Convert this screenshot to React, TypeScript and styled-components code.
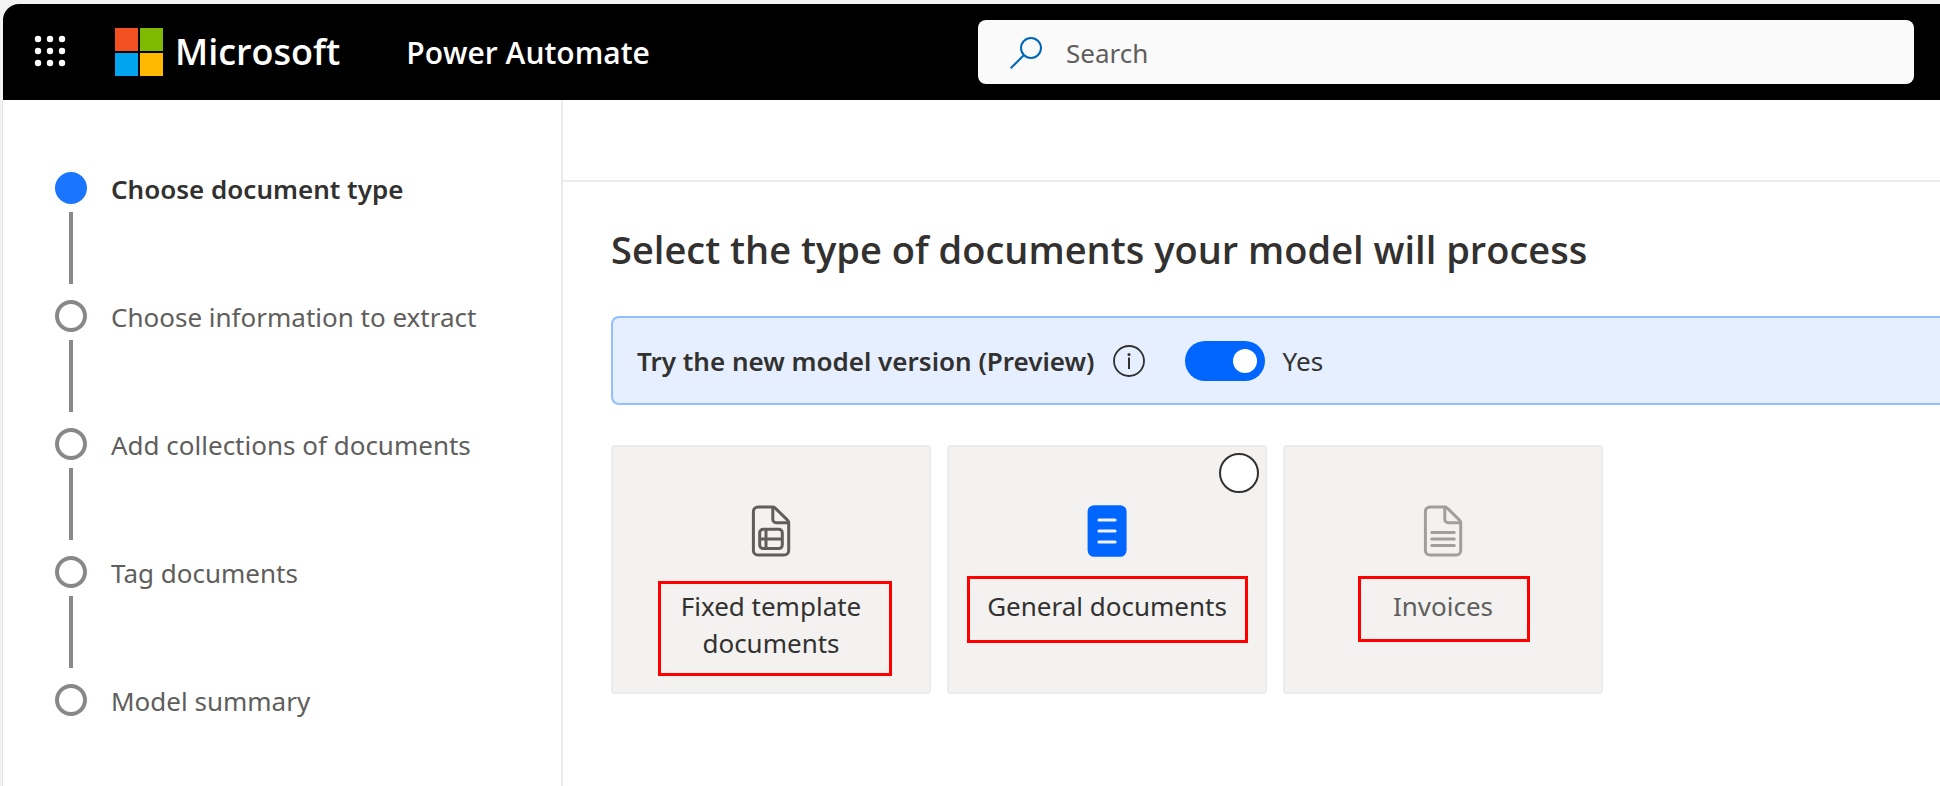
import React, { useState } from "react";
import styled, { createGlobalStyle } from "styled-components";

const GlobalStyle = createGlobalStyle`
  *, *::before, *::after { box-sizing: border-box; }
  body {
    margin: 0;
    background: #f3f3f3;
    color: #323130;
    font-family: "Noto Sans", "Open Sans", sans-serif;
    font-size: 26px;
  }
`;

const Shell = styled.div`
  display: flex;
  flex-direction: column;
  min-height: 100vh;
  padding: 4px 0 0 2px;
`;

const Header = styled.header`
  display: grid;
  grid-template-columns: minmax(660px, 975px) minmax(200px, 1fr);
  align-items: center;
  height: 96px;
  margin-left: 1px;
  padding-right: 26px;
  background: #000;
  border-top-left-radius: 16px;
`;

const Brand = styled.div`
  display: flex;
  align-items: center;
  padding-left: 30px;
`;

const LauncherButton = styled.button`
  display: flex;
  margin: 0 48px 0 0;
  padding: 0;
  border: 0;
  background: none;
  color: #fff;
`;

const MicrosoftLink = styled.a`
  display: flex;
  align-items: center;
  gap: 12px;
  color: #fff;
  font-family: "Open Sans", "Noto Sans", sans-serif;
  font-size: 36px;
  font-weight: 600;
  line-height: 48px;
  text-decoration: none;
`;

const ProductLink = styled.a`
  margin-left: 66px;
  padding-top: 2px;
  color: #fff;
  font-family: "Open Sans", "Noto Sans", sans-serif;
  font-size: 30px;
  font-weight: 600;
  line-height: 40px;
  text-decoration: none;
  white-space: nowrap;
`;

const SearchBox = styled.label`
  display: flex;
  align-items: center;
  gap: 24px;
  height: 64px;
  padding: 0 32px;
  border-radius: 8px;
  background: #fafafa;
`;

const SearchInput = styled.input`
  flex: 1;
  min-width: 0;
  padding: 2px 0 0;
  border: 0;
  outline: 0;
  background: none;
  color: #323130;
  font: inherit;
  &::placeholder {
    color: #605e5c;
    opacity: 1;
  }
`;

const Body = styled.div`
  display: flex;
  flex: 1;
  border-left: 1px solid #e5e5e5;
  background: #fff;
`;

const Sidebar = styled.nav`
  flex: 0 0 560px;
  padding: 72px 24px 0 52px;
  border-right: 2px solid #ebebeb;
`;

const Steps = styled.ol`
  display: flex;
  flex-direction: column;
  gap: 16px;
  margin: 0;
  padding: 0;
  list-style: none;
`;

const Step = styled.li`
  display: grid;
  grid-template-columns: 32px 1fr;
  grid-template-rows: 32px;
  column-gap: 24px;
  row-gap: 8px;
  justify-items: start;
  &:not(:last-child)::after {
    content: "";
    justify-self: center;
    width: 4px;
    height: 72px;
    background: #8a8886;
  }
`;

const StepDot = styled.span<{ $active: boolean }>`
  width: 32px;
  height: 32px;
  border: 4px solid ${(p) => (p.$active ? "#1a75ff" : "#8a8886")};
  border-radius: 50%;
  background: ${(p) => (p.$active ? "#1a75ff" : "#fff")};
`;

const StepLabel = styled.span<{ $active: boolean }>`
  color: ${(p) => (p.$active ? "#323130" : "#605e5c")};
  font-weight: ${(p) => (p.$active ? 600 : 400)};
  line-height: 34px;
  white-space: nowrap;
`;

const Main = styled.main`
  flex: 1;
  min-width: 0;
`;

const CommandBar = styled.div`
  height: 82px;
  border-bottom: 2px solid #ebebeb;
`;

const Content = styled.section`
  padding: 40px 0 40px 48px;
`;

const Title = styled.h1`
  margin: 0 0 40px;
  font-family: "Open Sans", "Noto Sans", sans-serif;
  font-size: 38px;
  font-weight: 600;
  line-height: 54px;
`;

const Banner = styled.div`
  display: flex;
  align-items: center;
  min-height: 89px;
  margin-bottom: 40px;
  padding-left: 24px;
  border: 2px solid #91bfff;
  border-right: 0;
  border-radius: 8px 0 0 8px;
  background: #e5efff;
`;

const BannerLabel = styled.label`
  font-weight: 600;
`;

const InfoButton = styled.button`
  display: flex;
  margin: 0 40px 0 18px;
  padding: 0;
  border: 0;
  background: none;
  color: #323130;
`;

const Toggle = styled.input`
  appearance: none;
  display: flex;
  align-items: center;
  width: 80px;
  height: 40px;
  margin: 0 18px 0 0;
  padding: 0 8px;
  border-radius: 20px;
  background: #8a8886;
  &::before {
    content: "";
    width: 24px;
    height: 24px;
    border-radius: 50%;
    background: #fff;
  }
  &:checked {
    justify-content: flex-end;
    background: #0066ff;
  }
`;

const Cards = styled.div`
  display: flex;
  flex-wrap: wrap;
  gap: 16px;
`;

const Card = styled.label<{ $muted: boolean }>`
  position: relative;
  display: flex;
  flex-direction: column;
  align-items: center;
  gap: 31px;
  width: 320px;
  min-height: 249px;
  padding: 58px 32px 24px;
  border: 2px solid #ebebeb;
  border-radius: 4px;
  background: #f3f2f0;
  color: ${(p) => (p.$muted ? "#605e5c" : "#323130")};
  line-height: 37px;
  text-align: center;
`;

const CardRadio = styled.input<{ $shown: boolean }>`
  appearance: none;
  position: absolute;
  top: 6px;
  right: 6px;
  width: 40px;
  height: 40px;
  margin: 0;
  border: 2px solid #323130;
  border-radius: 50%;
  background: #fff;
  opacity: ${(p) => (p.$shown ? 1 : 0)};
  &:checked {
    background: #0066ff;
  }
`;

type Frame = { left: number; top: number; width: number; height: number };

const Highlight = styled.span<{ $frame: Frame }>`
  position: absolute;
  left: ${(p) => p.$frame.left}px;
  top: ${(p) => p.$frame.top}px;
  width: ${(p) => p.$frame.width}px;
  height: ${(p) => p.$frame.height}px;
  border: 3px solid #ff0000;
  pointer-events: none;
`;

const WaffleIcon = () => (
  <svg width="34" height="34" viewBox="0 0 34 34" fill="currentColor" aria-hidden="true">
    {[4, 16, 28].map((y) => [5, 17, 29].map((x) => <circle key={`${x}-${y}`} cx={x} cy={y} r="3.2" />))}
  </svg>
);

const MicrosoftLogo = () => (
  <svg width="48" height="48" viewBox="0 0 48 48" aria-hidden="true">
    <path fill="#f25022" d="M0 0h23v23H0z" />
    <path fill="#7fba00" d="M25 0h23v23H25z" />
    <path fill="#00a4ef" d="M0 25h23v23H0z" />
    <path fill="#ffb900" d="M25 25h23v23H25z" />
  </svg>
);

const SearchIcon = () => (
  <svg width="32" height="34" viewBox="0 -1 32 34" fill="none" stroke="#0067b8" strokeWidth="2" aria-hidden="true">
    <circle cx="21" cy="12" r="10" />
    <path d="M14 19 0.7 32.3" />
  </svg>
);

const InfoIcon = () => (
  <svg width="32" height="32" viewBox="0 0 32 32" fill="none" stroke="currentColor" strokeWidth="1.8" aria-hidden="true">
    <circle cx="16" cy="16" r="15" />
    <path d="M16 12.5v11.5" strokeWidth="2" />
    <circle cx="16" cy="9.5" r="1.5" fill="currentColor" stroke="none" />
  </svg>
);

const PageOutline = () => (
  <>
    <path d="M7 1.9h14.5c1 0 1.8.4 2.5 1l12.5 12.2c.8.7 1.2 1.6 1.2 2.6v27.8a4.6 4.6 0 0 1-4.6 4.6H7a4.6 4.6 0 0 1-4.6-4.6v-39A4.6 4.6 0 0 1 7 1.9z" />
    <path d="M21.8 2v12.5a3.2 3.2 0 0 0 3.2 3.2h12.5" />
  </>
);

const TemplateIcon = () => (
  <svg width="40" height="52" viewBox="0 0 40 52" fill="none" stroke="#605e5c" strokeWidth="3" aria-hidden="true">
    <PageOutline />
    <rect x="8.7" y="24.3" width="22.6" height="19.3" rx="3.5" />
    <path d="M15 24v20M9 34h22" />
  </svg>
);

const GeneralIcon = () => (
  <svg width="40" height="52" viewBox="0 0 40 52" fill="none" aria-hidden="true">
    <rect x="0.6" y="0.2" width="39" height="51.6" rx="6.5" fill="#0066ff" />
    <path d="M12 15h16M12 26h16M12 37h16" stroke="#f3f2f0" strokeWidth="3.2" strokeLinecap="round" />
  </svg>
);

const InvoiceIcon = () => (
  <svg width="40" height="52" viewBox="0 0 40 52" fill="none" stroke="#a19f9d" strokeWidth="3" strokeLinecap="round" aria-hidden="true">
    <PageOutline />
    <path d="M8.7 27.6h22.6M8.7 34h22.6M8.7 40.5h22.6" />
  </svg>
);

const steps = [
  "Choose document type",
  "Choose information to extract",
  "Add collections of documents",
  "Tag documents",
  "Model summary",
];

const documentTypes = [
  {
    name: "Fixed template documents",
    icon: <TemplateIcon />,
    muted: false,
    radio: false,
    frame: { left: 45, top: 134, width: 234, height: 95 },
  },
  {
    name: "General documents",
    icon: <GeneralIcon />,
    muted: false,
    radio: true,
    frame: { left: 18, top: 129, width: 281, height: 67 },
  },
  {
    name: "Invoices",
    icon: <InvoiceIcon />,
    muted: true,
    radio: false,
    frame: { left: 73, top: 129, width: 172, height: 66 },
  },
];

export default function App() {
  const [preview, setPreview] = useState(true);

  return (
    <Shell>
      <GlobalStyle />
      <Header>
        <Brand>
          <LauncherButton type="button" aria-label="App launcher">
            <WaffleIcon />
          </LauncherButton>
          <MicrosoftLink href="#">
            <MicrosoftLogo />
            Microsoft
          </MicrosoftLink>
          <ProductLink href="#">Power Automate</ProductLink>
        </Brand>
        <SearchBox>
          <SearchIcon />
          <SearchInput type="text" placeholder="Search" aria-label="Search" />
        </SearchBox>
      </Header>
      <Body>
        <Sidebar aria-label="Progress">
          <Steps>
            {steps.map((step, i) => (
              <Step key={step} aria-current={i === 0 ? "step" : undefined}>
                <StepDot $active={i === 0} />
                <StepLabel $active={i === 0}>{step}</StepLabel>
              </Step>
            ))}
          </Steps>
        </Sidebar>
        <Main>
          <CommandBar />
          <Content>
            <Title>Select the type of documents your model will process</Title>
            <Banner>
              <BannerLabel htmlFor="preview">Try the new model version (Preview)</BannerLabel>
              <InfoButton type="button" aria-label="More information">
                <InfoIcon />
              </InfoButton>
              <Toggle
                id="preview"
                type="checkbox"
                role="switch"
                checked={preview}
                onChange={(e) => setPreview(e.target.checked)}
              />
              <span>{preview ? "Yes" : "No"}</span>
            </Banner>
            <Cards>
              {documentTypes.map((type) => (
                <Card key={type.name} $muted={type.muted}>
                  <CardRadio type="radio" name="document-type" $shown={type.radio} />
                  {type.icon}
                  <span>{type.name}</span>
                  <Highlight $frame={type.frame} />
                </Card>
              ))}
            </Cards>
          </Content>
        </Main>
      </Body>
    </Shell>
  );
}
